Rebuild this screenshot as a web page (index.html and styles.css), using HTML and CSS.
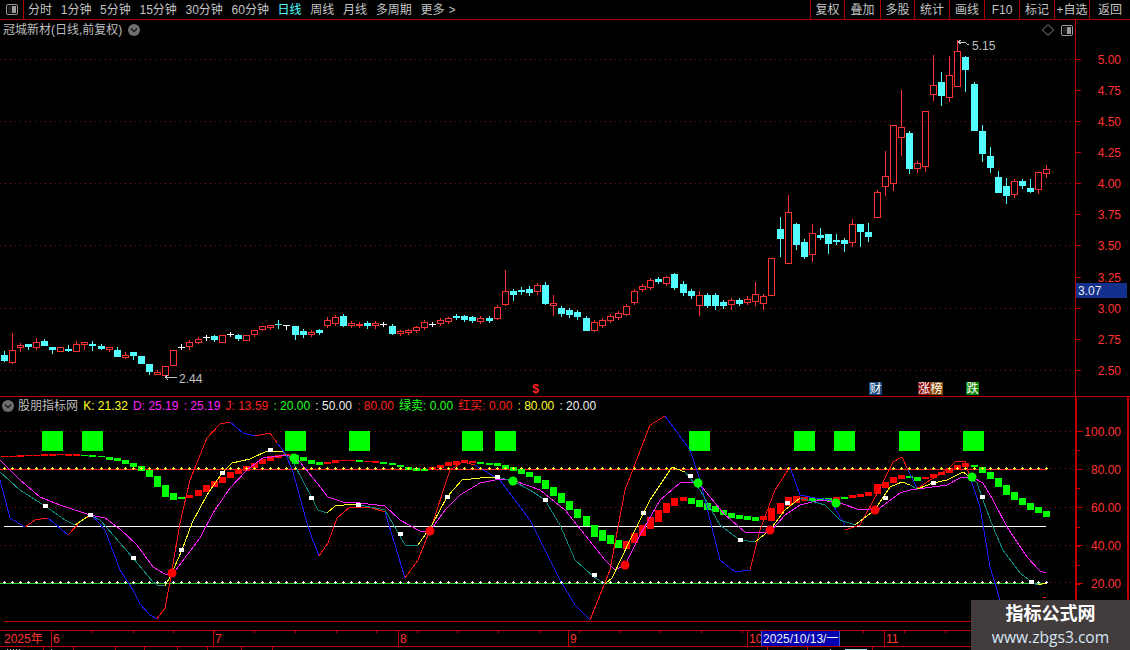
FILE: index.html
```
<!DOCTYPE html>
<html lang="zh-CN">
<head>
<meta charset="utf-8">
<title>冠城新材</title>
<link rel="stylesheet" href="styles.css">
</head>
<body>
<div class="app">
  <header class="toolbar">
    <div class="toggle">
      <svg class="icon-win" viewBox="0 0 12 11"><rect x="0.5" y="0.5" width="11" height="10" rx="1.5" class="win-frame"/><rect x="2" y="2" width="4" height="7" class="win-left"/><rect x="6" y="2" width="4" height="7" class="win-right"/></svg>
    </div>
    <nav class="periods">
      <span>分时</span><span>1分钟</span><span>5分钟</span><span>15分钟</span><span>30分钟</span><span>60分钟</span><span class="active">日线</span><span>周线</span><span>月线</span><span>多周期</span><span>更多<i class="more">&gt;</i></span>
    </nav>
    <div class="actions">
      <span>复权</span><span>叠加</span><span>多股</span><span>统计</span><span>画线</span><span>F10</span><span>标记</span><span>+自选</span><span>返回</span>
    </div>
  </header>

  <section class="pane main-pane">
    <svg id="price" class="chart" viewBox="0 20 1130 376"></svg>
    <div class="title-row">
      <span>冠城新材(日线,前复权)</span>
      <svg class="chev" viewBox="0 0 12 12"><circle cx="6" cy="6" r="6" class="chev-bg"/><path d="M3 4.5 6 7.5 9 4.5" class="chev-mark"/></svg>
    </div>
    <div class="pane-tools">
      <svg class="icon-diamond" viewBox="0 0 12 12"><path d="M6 .5 11.5 6 6 11.5 .5 6Z"/></svg>
      <svg class="icon-win" viewBox="0 0 12 11"><rect x="0.5" y="0.5" width="11" height="10" rx="1.5" class="win-frame"/><rect x="2" y="2" width="4" height="7" class="win-left"/><rect x="6" y="2" width="4" height="7" class="win-right"/></svg>
    </div>
    <span class="price-tag">3.07</span>
    <span class="flag dollar">$</span>
    <span class="flag cai">财</span>
    <span class="flag zhang">涨</span>
    <span class="flag bang">榜</span>
    <span class="flag die">跌</span>
  </section>

  <section class="pane sub-pane">
    <svg id="kdj" class="chart" viewBox="0 397 1130 233"></svg>
    <div class="legend">
      <svg class="chev" viewBox="0 0 12 12"><circle cx="6" cy="6" r="6" class="chev-bg"/><path d="M3 4.5 6 7.5 9 4.5" class="chev-mark"/></svg>
      <span class="legend-name">股朋指标网</span>
      <span class="yellow">K: 21.32</span>
      <span class="magenta">D: 25.19</span>
      <span class="magenta">: 25.19</span>
      <span class="red">J: 13.59</span>
      <span class="green">: 20.00</span>
      <span class="white">: 50.00</span>
      <span class="red">: 80.00</span>
      <span class="green">绿卖: 0.00</span>
      <span class="red">红买: 0.00</span>
      <span class="yellow">: 80.00</span>
      <span class="white">: 20.00</span>
    </div>
  </section>

  <footer class="dates">
    <svg id="axis" class="chart" viewBox="0 631 1130 15"></svg>
  </footer>
  <svg id="tabs" class="tabs" viewBox="0 647 1130 3"></svg>

  <aside class="watermark">
    <strong>指标公式网</strong>
    <span>www.zbgs3.com</span>
  </aside>
</div>
<script src="script.js"></script>
</body>
</html>
```
FILE: styles.css
```
* { box-sizing: border-box; }
html, body { margin: 0; padding: 0; background: #000; }
body { font: 12px/1 "Liberation Sans", "Noto Sans CJK SC", sans-serif; color: #c4c4c4; }
.app { position: relative; width: 1130px; height: 650px; overflow: hidden; background: #000; display: flex; flex-direction: column; }

.toolbar { height: 20px; flex: none; display: flex; align-items: stretch; border-bottom: 1px solid #b00000; }
.toggle { width: 24px; flex: none; border-right: 1px solid #b00000; display: flex; align-items: center; justify-content: center; }
.periods { display: flex; align-items: center; gap: 8.7px; padding-left: 4px; white-space: nowrap; }
.periods .active { color: #54ffff; }
.more { font-style: normal; margin-left: 4px; }
.actions { margin-left: auto; width: 320px; display: grid; grid-template-columns: 34px 36px 34px 35px 35px 35px 35px 35px 41px; }
.actions span { border-left: 1px solid #b00000; display: flex; align-items: center; justify-content: center; white-space: nowrap; }

.icon-win { width: 12px; height: 11px; display: block; }
.win-frame { fill: none; stroke: #9a9a9a; }
.win-left { fill: #1c1c1c; }
.win-right { fill: #9a9a9a; }

.pane { position: relative; flex: none; }
.chart { display: block; width: 100%; height: 100%; }
.main-pane { height: 377px; border-bottom: 1px solid #c00000; }
.sub-pane { height: 234px; border-bottom: 1px solid #c00000; }

.title-row { position: absolute; left: 3px; top: 3px; display: flex; align-items: center; gap: 6px; color: #bdbdbd; white-space: nowrap; height: 13px; }
.chev { width: 12px; height: 12px; flex: none; display: block; }
.chev-bg { fill: #6e6e6e; }
.chev-mark { fill: none; stroke: #161616; stroke-width: 1.3; }

.pane-tools { position: absolute; left: 1042px; top: 4px; display: flex; align-items: center; gap: 7px; }
.icon-diamond { width: 12px; height: 12px; display: block; }
.icon-diamond path { fill: none; stroke: #8a8a8a; }

.price-tag { position: absolute; left: 1076px; top: 263px; width: 51px; height: 15px; background: #12308c; color: #e8e8e8; padding: 2px 0 0 2px; }

.flag { position: absolute; top: 362px; width: 13px; height: 13px; display: flex; align-items: center; justify-content: center; color: #fff; }
.dollar { left: 529px; color: #ff2020; font-weight: bold; }
.cai { left: 869px; background: #174a7c; }
.zhang { left: 918px; width: 12px; background: #8a0c0c; }
.bang { left: 930px; background: #8a4a0a; }
.die { left: 966px; background: #0a860a; }

.legend { position: absolute; left: 2px; top: 1px; height: 15px; display: flex; align-items: center; gap: 5.2px; white-space: nowrap; }
.legend-name { color: #bdbdbd; margin: 0 0 0 -1.2px; width: 60px; }
.yellow { color: #ffff20; }
.magenta { color: #ff20ff; }
.red { color: #ff2020; }
.green { color: #20ff20; }
.white { color: #f0f0f0; }

.dates { height: 16px; flex: none; border-bottom: 1px solid #c00000; }
.tabs { flex: none; display: block; width: 100%; height: 3px; }

.watermark { position: absolute; right: 0; bottom: 0; width: 159px; height: 50px; background: #423c3c; display: flex; flex-direction: column; align-items: center; justify-content: center; gap: 4px; }
.watermark strong { font-size: 18px; line-height: 21px; color: #fff; font-weight: 700; }
.watermark span { font: 15.6px/17px "Open Sans", sans-serif; color: #d6e6f6; }

svg text { font: 12px "Liberation Sans", "Noto Sans CJK SC", sans-serif; }
.ax { fill: #ff3232; }
.lbl { fill: #c0c0c0; }
.date-sel { fill: #f0f0f0; }
```
FILE: script.js
```
var NS = 'http://www.w3.org/2000/svg';
var RED = '#ff3232', CYAN = '#54ffff', LINE = '#c00000', GRID = '#8c1010';

function el(svg, tag, attrs, text) {
  var n = document.createElementNS(NS, tag);
  for (var k in attrs) n.setAttribute(k, attrs[k]);
  if (text !== undefined) n.textContent = text;
  svg.appendChild(n);
  return n;
}
function rect(svg, x, y, w, h, fill) {
  el(svg, 'rect', { x: x, y: y, width: w, height: h, fill: fill, 'shape-rendering': 'crispEdges' });
}
function dotted(svg, y, x1, x2) {
  el(svg, 'line', { x1: x1, x2: x2, y1: y + 0.5, y2: y + 0.5, stroke: GRID, 'stroke-dasharray': '1 4', 'shape-rendering': 'crispEdges' });
}
function cx(i) { return 4 + 8 * i + Math.floor(i / 12); }

/* type, body top, body bottom, wick top, wick bottom */
var candles = [
['c',355,361,351,362],['r',350,363,333,364],['r',345,348,343,352],['c',344,347,344,350],['r',342,348,338,350],
['c',341,346,339,346],['c',347,350,347,354],['r',347,352,347,352],['c',349,351,345,352],['r',344,352,341,352],
['r',342,345,342,350],['c',344,346,341,351],['c',346,349,344,350],['r',347,350,347,352],['c',350,357,347,357],
['r',355,358,352,359],['c',352,356,352,360],['c',356,364,356,364],['c',364,372,364,375],['r',372,375,370,375],
['r',366,376,366,376],['r',350,366,350,366],['w',347,347,344,350],['r',342,347,340,350],['r',339,343,337,344],
['w',337,337,335,341],['c',336,340,335,342],['r',335,343,335,343],['w',334,334,332,337],['c',335,339,334,341],
['r',335,341,335,341],['r',330,335,330,337],['r',326,330,326,331],['r',325,328,325,330],['cw',324,324,320,329],
['w',325,325,325,330],['c',326,335,326,340],['c',331,335,329,338],['r',332,335,330,337],['c',330,333,329,335],
['r',320,326,317,328],['r',317,324,315,326],['c',316,326,314,327],['r',323,326,321,328],['r',324,326,322,328],
['c',323,326,321,329],['r',323,326,321,329],['w',324,324,322,327],['c',326,334,324,335],['r',331,334,330,336],
['r',330,333,329,335],['r',327,331,326,333],['r',322,328,320,330],['w',324,324,322,327],['r',320,324,318,326],
['r',318,322,317,324],['c',316,318,314,320],['c',316,320,315,322],['c',317,321,316,323],['r',318,322,316,324],
['c',318,321,316,323],['r',307,319,305,320],['r',291,305,270,306],['c',291,295,289,301],['c',290,292,287,295],
['c',289,293,286,296],['r',285,292,283,295],['c',285,304,282,305],['r',303,306,295,316],['c',308,314,306,317],
['c',310,315,308,318],['c',312,317,310,320],['c',318,331,316,331],['r',322,331,320,332],['r',320,326,318,328],
['r',316,321,314,323],['r',313,318,311,320],['r',306,315,304,316],['r',291,303,289,305],['r',286,290,284,292],
['r',280,288,278,290],['c',279,282,277,284],['r',277,284,276,286],['c',274,288,273,290],['c',284,293,281,296],
['c',291,296,289,299],['r',295,306,291,316],['c',295,306,293,308],['c',295,306,293,310],['c',302,306,300,309],
['r',300,305,298,310],['c',300,304,298,306],['r',299,303,296,305],['r',294,302,282,306],['r',296,304,294,310],
['r',258,296,258,296],['c',229,239,217,257],['r',212,264,195,264],['c',224,245,223,250],['c',242,257,239,259],
['r',233,255,224,262],['c',235,238,228,240],['c',234,244,234,254],['c',240,242,234,245],['c',240,244,238,252],
['r',224,243,219,247],['c',224,232,224,247],['c',232,237,223,242],['r',192,218,190,218],['r',176,187,151,196],
['r',125,184,125,191],['r',127,138,90,156],['c',133,169,131,174],['r',163,169,161,173],['r',111,167,111,172],
['r',85,95,55,101],['c',82,96,72,106],['r',75,98,56,102],['r',51,87,40,87],['c',57,70,56,92],
['c',84,131,82,131],['c',131,154,125,162],['c',156,168,147,173],['c',177,193,171,193],['c',186,196,178,204],
['r',181,195,179,198],['c',181,186,179,189],['c',188,192,179,193],['r',172,190,172,194],['r',169,174,165,178]
];

/* colour, top, bottom for each bar */
var G = '#00ff00', R = '#ff0000';
var blocks = [
[R,456,457],[R,456,457],[R,455,457],[R,455,456],[R,455,456],[R,454,456],[R,454,456],[R,454,455],[R,454,456],[R,454,456],
[G,455,456],[G,455,457],[G,456,457],[G,457,460],[G,458,461],[G,460,464],[G,463,467],[G,466,471],[G,470,477],[G,476,487],
[G,485,497],[G,493,500],[G,497,499],[R,495,498],[R,490,496],[R,485,492],[R,481,487],[R,477,483],[R,472,478],[R,469,474],
[R,466,471],[R,463,468],[R,459,464],[R,456,461],[R,455,458],[R,454,456],[G,455,464],[G,457,461],[G,460,464],[G,462,465],
[R,462,464],[R,460,463],[R,460,461],[R,460,461],[G,460,462],[R,461,462],[R,461,463],[G,462,464],[G,463,465],[G,465,467],
[G,467,470],[G,468,471],[G,469,471],[R,467,470],[R,465,468],[R,462,466],[R,461,465],[R,460,463],[R,461,463],[G,462,464],
[G,463,465],[G,463,466],[G,465,469],[G,467,471],[G,469,474],[G,472,477],[G,476,483],[G,480,489],[G,487,496],[G,493,503],
[G,501,510],[G,509,518],[G,516,526],[G,525,537],[G,530,541],[G,535,544],[G,540,548],[R,541,549],[R,533,543],[R,525,536],
[R,517,529],[R,510,522],[R,503,513],[R,498,506],[R,497,501],[G,498,504],[G,500,507],[G,503,510],[G,506,512],[G,510,515],
[G,513,518],[G,515,519],[G,516,520],[G,517,521],[R,516,520],[R,508,521],[R,503,514],[R,497,506],[R,496,503],[R,497,501],
[G,498,501],[G,498,501],[G,498,501],[R,497,500],[G,497,499],[R,495,498],[R,494,497],[R,492,496],[R,484,494],[R,482,488],
[R,477,483],[R,475,479],[G,476,478],[G,477,481],[R,477,479],[R,474,478],[R,472,475],[R,468,473],[R,465,470],[R,463,467],
[G,465,467],[G,467,473],[G,472,479],[G,478,487],[G,485,495],[G,492,500],[G,498,505],[G,503,510],[G,507,513],[G,511,517]
];

var BLUE = '#1c1cff', JR = '#ff1414', YEL = '#ffff20', TEAL = '#0f8a80', MAG = '#ff20ff';
var J = [
[BLUE,[0,480,10,518,25,527]],[JR,[25,527,35,520,48,518]],[BLUE,[48,518,68,535]],[JR,[68,535,82,520,92,515]],
[BLUE,[92,515,105,530,120,570,133,590,140,604,150,615,157,619]],
[JR,[157,619,165,608,170,582,180,523,190,480,207,438,220,424,230,422]],
[BLUE,[230,422,243,433,255,436]],[JR,[255,436,270,433,277,443]],
[BLUE,[277,443,285,453,293,472,307,523,312,538,319,556]],
[JR,[319,556,328,543,337,518,350,507,372,508,385,512]],
[BLUE,[385,512,395,545,405,578]],[JR,[405,578,418,560,432,525,450,470,463,462,475,465]],
[BLUE,[475,465,500,480,530,520,560,580,575,605,590,620]],
[JR,[590,620,610,570,625,490,650,425,665,416]],
[BLUE,[665,416,690,450,700,480,720,560,735,572,750,570]],
[JR,[750,570,760,530,775,490,790,467]],
[BLUE,[790,467,800,495,815,498,830,500,845,525]],
[JR,[845,530,860,525,880,488,893,462,902,457,908,470]],
[BLUE,[908,470,917,488]],[JR,[917,488,920,487,930,480,947,470,955,462,965,461,970,477]],
[BLUE,[970,477,980,507,990,567,1000,600]],[JR,[1043,598,1046,597]]
];
var K = [
[TEAL,[0,472,20,490,45,506,65,520,75,525]],[YEL,[75,525,90,515]],
[TEAL,[90,515,100,520,120,543,133,558,153,582,157,585,165,586]],
[YEL,[165,586,170,577,182,550,192,523,207,495,222,473,232,463,250,459,267,451,283,452]],
[TEAL,[283,452,293,462,312,498,318,510,327,513]],[YEL,[327,513,335,506,353,504,360,505]],
[TEAL,[360,505,385,510,405,545,418,545]],[YEL,[418,545,432,525,447,497,462,480,480,478,497,477]],
[TEAL,[497,477,513,481,530,490,545,500,560,525,575,560,594,577,605,584]],
[YEL,[605,584,612,578,630,540,650,500,672,467,685,472]],
[TEAL,[685,472,700,490,720,525,740,540,755,542]],
[YEL,[755,542,770,530,785,510,800,498]],
[TEAL,[800,498,825,505,840,520,855,525]],
[YEL,[855,525,875,510,880,502,890,487,902,482,910,485]],[TEAL,[910,485,917,489]],
[YEL,[917,489,920,488,933,483,947,480,963,472,970,477]],
[TEAL,[970,477,977,483,983,500,993,527,1003,550,1020,573,1033,583,1038,585]],[YEL,[1038,585,1046,583]]
];
var D = [
[MAG,[0,460,20,480,40,497,60,505,90,515,105,518,120,529,137,545,153,567,165,574,173,574,187,555,200,538,213,513,230,488,247,470,263,458,287,455,300,462,317,483,328,497,343,502,360,503,385,506,400,520,420,531,430,531,445,510,460,495,480,483,500,479,515,481,540,490,565,510,585,535,605,560,615,570,625,565,640,535,660,500,680,483,698,482,710,497,725,515,745,532,770,532,785,515,800,505,820,500,840,503,860,510,880,508,900,493,910,490,947,485,960,478,972,477,983,483,993,500,1007,527,1027,557,1040,571,1046,573]]
];

function drawLines(svg, set) {
  set.forEach(function (s) {
    el(svg, 'polyline', { points: s[1].join(' '), fill: 'none', stroke: s[0], 'stroke-width': 1, 'shape-rendering': 'crispEdges' });
  });
}
function cross(svg, x, y, c) {
  rect(svg, x - 1, y, 3, 1, c);
  rect(svg, x, y - 1, 1, 3, c);
}

/* price pane */
(function () {
  var s = document.getElementById('price');
  [59, 121, 183, 245, 308, 370].forEach(function (y) { dotted(s, y, 0, 1075); });
  rect(s, 1075, 20, 1, 376, LINE);
  [[59, '5.00'], [90, '4.75'], [121, '4.50'], [152, '4.25'], [183, '4.00'], [214, '3.75'], [245, '3.50'], [277, '3.25'], [308, '3.00'], [339, '2.75'], [370, '2.50']].forEach(function (t) {
    rect(s, 1075, t[0], 6, 1, LINE);
    el(s, 'text', { x: 1121, y: t[0] + 4.5, 'text-anchor': 'end', 'class': 'ax' }, t[1]);
  });
  candles.forEach(function (c, i) {
    var x = cx(i), t = c[0], top = c[1], bot = c[2], wt = c[3], wb = c[4];
    if (t === 'w' || t === 'cw') {
      var col = t === 'w' ? '#ffffff' : CYAN;
      rect(s, x - 3, top, 7, 1, col);
      rect(s, x, wt, 1, wb - wt, col);
    } else if (t === 'c') {
      rect(s, x, wt, 1, wb - wt, CYAN);
      rect(s, x - 3, top, 7, bot - top, CYAN);
    } else {
      if (wt < top) rect(s, x, wt, 1, top - wt, RED);
      if (wb > bot) rect(s, x, bot, 1, wb - bot, RED);
      el(s, 'rect', { x: x - 2.5, y: top + 0.5, width: 6, height: bot - top - 1, fill: 'none', stroke: RED, 'shape-rendering': 'crispEdges' });
    }
  });
  /* high and low marks */
  el(s, 'text', { x: 972, y: 50, 'class': 'lbl' }, '5.15');
  el(s, 'path', { d: 'M961 40 958 42 961 44M958 42 964 42 969 45', fill: 'none', stroke: '#c0c0c0', 'shape-rendering': 'crispEdges' });
  el(s, 'text', { x: 179, y: 383, 'class': 'lbl' }, '2.44');
  el(s, 'path', { d: 'M168 375 165 377 168 380M165 377 177 377', fill: 'none', stroke: '#c0c0c0', 'shape-rendering': 'crispEdges' });
})();

/* KDJ pane */
(function () {
  var s = document.getElementById('kdj');
  [431, 468, 507, 545, 582].forEach(function (y) { dotted(s, y, 0, 1075); });
  rect(s, 1075, 397, 2, 233, LINE);
  rect(s, 1127, 397, 2, 233, LINE);
  for (var y = 431; y < 625; y += 19.1) rect(s, 1077, Math.round(y), 3, 1, LINE);
  [[431, '100.00'], [469, '80.00'], [507, '60.00'], [545, '40.00'], [583, '20.00']].forEach(function (t) {
    rect(s, 1077, t[0], 6, 1, LINE);
    el(s, 'text', { x: 1121, y: t[0] + 5, 'text-anchor': 'end', 'class': 'ax' }, t[1]);
  });
  rect(s, 4, 621, 1071, 1, LINE);
  rect(s, 0, 469, 1046, 1, '#ff2020');
  rect(s, 0, 583, 1046, 1, '#20d020');
  rect(s, 4, 526, 1042, 1, '#ffffff');
  [42, 82, 285, 349, 462, 495, 689, 794, 834, 899, 963].forEach(function (x) { rect(s, x, 431, 21, 20, '#00ff00'); });
  blocks.forEach(function (b, i) { rect(s, cx(i) - 3, b[1], 7, b[2] - b[1], b[0]); });
  drawLines(s, J); drawLines(s, D); drawLines(s, K);
  for (var i = 0; i < 130; i++) {
    cross(s, cx(i), 468, '#ffff20');
    cross(s, cx(i), 582, '#ffffff');
  }
  [[45, 506], [90, 515], [133, 558], [181, 550], [222, 473], [270, 450], [311, 498], [358, 505], [400, 534], [447, 497], [497, 477], [545, 500], [594, 575], [643, 513], [690, 476], [740, 540], [787, 503], [835, 501], [885, 498], [933, 483], [982, 497], [1031, 582]].forEach(function (m) {
    rect(s, m[0] - 2, m[1] - 2, 5, 4, '#ffffff');
  });
  [[172, 573, R], [430, 531, R], [625, 565, R], [770, 530, R], [875, 510, R], [294, 458, G], [513, 481, G], [698, 483, G], [836, 503, G], [972, 477, G]].forEach(function (d) {
    el(s, 'circle', { cx: d[0], cy: d[1], r: 4.5, fill: d[2] });
  });
})();

/* date axis */
(function () {
  var s = document.getElementById('axis');
  [51, 213, 398, 568, 747, 761, 884].forEach(function (x) { rect(s, x, 631, 1, 15, LINE); });
  for (var x = 92; x < 1075; x += 40.6) rect(s, Math.round(x), 631, 1, 2, LINE);
  [[4, '2025年'], [53, '6'], [215, '7'], [400, '8'], [570, '9'], [749, '10'], [886, '11']].forEach(function (t) {
    el(s, 'text', { x: t[0], y: 643, 'class': 'ax' }, t[1]);
  });
  rect(s, 761, 631, 79, 15, '#0000b0');
  rect(s, 761, 631, 1, 15, '#3a5ae0');
  rect(s, 839, 631, 1, 15, '#3a5ae0');
  el(s, 'text', { x: 763, y: 643, 'class': 'date-sel' }, '2025/10/13/一');
})();

/* clipped bottom strip */
(function () {
  var s = document.getElementById('tabs');
  [43, 73, 115, 144, 177, 207, 241, 272, 767, 807, 872].forEach(function (x) { rect(s, x, 647, 1, 3, LINE); });
  [[7, 1], [10, 1], [13, 1], [16, 1], [19, 1], [51, 1]].forEach(function (b) { rect(s, b[0], 649, b[1], 1, '#c0c0c0'); });
  rect(s, 830, 649, 1, 1, '#e0e0e0');
  rect(s, 845, 649, 22, 1, '#a0e0e0');
})();
```
